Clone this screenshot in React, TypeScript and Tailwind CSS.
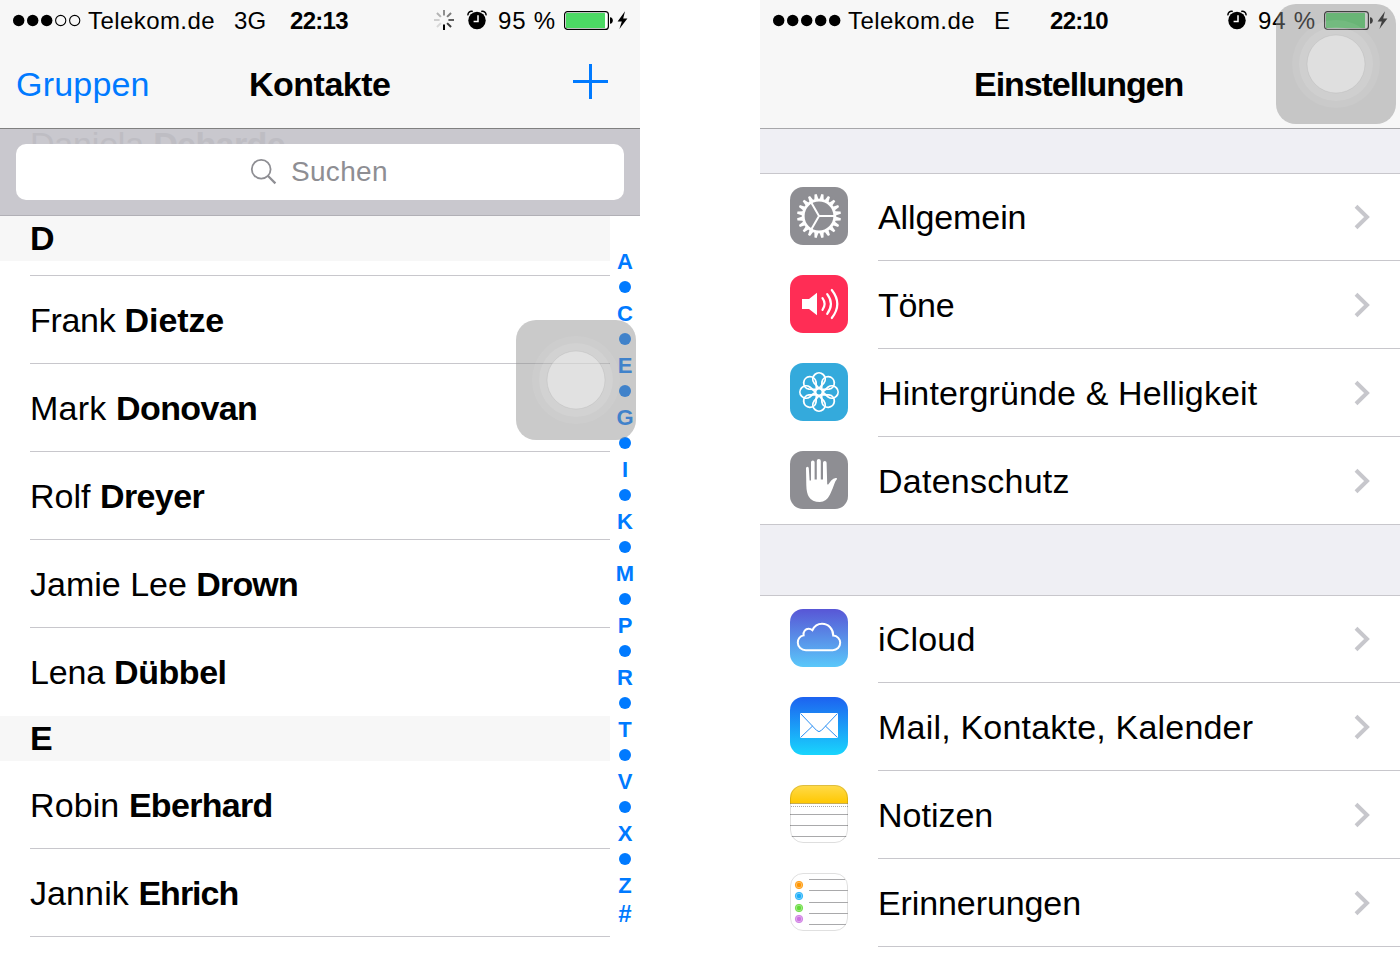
import React from "react";

const FONT = "font-['Liberation_Sans',Arial,sans-serif]";

function Signal({ filled }: { filled: number }) {
  return (
    <svg width="68" height="14" viewBox="0 0 68 14" className="shrink-0">
      {[0, 1, 2, 3, 4].map((i) =>
        i < filled ? (
          <circle key={i} cx={5.7 + i * 14} cy="7.5" r="5.7" fill="#000" />
        ) : (
          <circle key={i} cx={5.7 + i * 14} cy="7.5" r="5.1" fill="none" stroke="#000" strokeWidth="1.1" />
        )
      )}
    </svg>
  );
}

function Spinner() {
  const shades = ["#8e8e8e", "#7c7c7c", "#606060", "#3a3a3a", "#000", "#d8d8d8", "#cfcfcf", "#b4b4b4"];
  return (
    <svg width="20" height="20" viewBox="-10 -10 20 20" className="ml-px shrink-0">
      {shades.map((c, i) => (
        <line key={i} x1="0" y1="-4.4" x2="0" y2="-10" stroke={c} strokeWidth="2" transform={`rotate(${i * 45})`} />
      ))}
    </svg>
  );
}

function Alarm() {
  return (
    <svg width="20" height="20" viewBox="0 0 20 20" className="shrink-0">
      <circle cx="10" cy="10.5" r="8.7" fill="#000" />
      <path d="M11 5.2v6.3H6.6" fill="none" stroke="#fff" strokeWidth="1.5" />
      <path d="M1 5.4C.6 2.6 3 .9 5.8 1.5M19 5.4c.4-2.8-2-4.5-4.8-3.9" fill="none" stroke="#000" strokeWidth="1.5" />
    </svg>
  );
}

function Battery() {
  return (
    <svg width="65" height="22" viewBox="0 0 65 22" className="mt-[2px] shrink-0">
      <rect x="0.6" y="1.6" width="43.8" height="17.8" rx="3" fill="#fff" stroke="#000" strokeWidth="1.2" />
      <rect x="2" y="3" width="39" height="15" rx="0.5" fill="#4cd964" />
      <path d="M46 7.2q2.8.4 2.8 3.3t-2.8 3.3z" fill="#000" />
      <path d="M61 1.2l-7.4 10.2h4.2l-2.4 7.6 8-10.4h-4.2z" fill="#000" />
    </svg>
  );
}

function StatusBar({ filled, net, time, pct, spinner }: { filled: number; net: string; time: string; pct: string; spinner?: boolean }) {
  return (
    <div className="flex h-10 items-center pl-[13px] text-[24px] leading-[40px] whitespace-pre">
      <div className="flex w-[75px] items-center">
        <Signal filled={filled} />
      </div>
      <div className="w-[146px] tracking-[0.42px] pt-[2px]">Telekom.de</div>
      <div className="w-[56px] pt-[2px] tracking-[0.1px]">{net}</div>
      <div className="w-[143px] pt-[2px] font-bold tracking-[-0.7px]">{time}</div>
      <div className="flex w-[34px] items-center">{spinner && <Spinner />}</div>
      <div className="flex w-[31px] items-center">
        <Alarm />
      </div>
      <div className="w-[66px] pt-[2px] tracking-[0.8px]">{pct}</div>
      <Battery />
    </div>
  );
}

function Assistive() {
  return (
    <svg width="120" height="120" viewBox="0 0 120 120">
      <rect width="120" height="120" rx="20" fill="#8b8b8b" fillOpacity="0.46" />
      <circle cx="60" cy="60" r="44" fill="#fff" fillOpacity="0.07" />
      <circle cx="60" cy="60" r="37" fill="#fff" fillOpacity="0.1" />
      <circle cx="60" cy="60" r="29" fill="#fff" fillOpacity="0.34" stroke="#999" strokeOpacity="0.2" strokeWidth="1" />
    </svg>
  );
}

type Contact = { first: string; last: string; firstTracking?: string; lastTracking: string; rule?: boolean };

function ContactRow({ first, last, firstTracking = "", lastTracking, rule = true }: Contact) {
  return (
    <div className="ml-[30px] h-[88px]">
      <div
        className={
          rule
            ? "h-[88px] border-b border-[#c8c7cc] text-[34px] leading-[88px] whitespace-pre"
            : "h-[88px] text-[34px] leading-[88px] whitespace-pre"
        }
      >
        <span className={firstTracking}>{first} </span>
        <span className={"font-bold " + lastTracking}>{last}</span>
      </div>
    </div>
  );
}

function SectionHeader({ letter }: { letter: string }) {
  return <div className="h-[45px] bg-[#f7f7f7] pl-[30px] text-[34px] font-bold leading-[44px]">{letter}</div>;
}

const INDEX = ["A", "", "C", "", "E", "", "G", "", "I", "", "K", "", "M", "", "P", "", "R", "", "T", "", "V", "", "X", "", "Z"];

function Contacts() {
  return (
    <section className="relative h-[960px] w-[640px] overflow-hidden bg-white">
      <header className="h-[129px] border-b border-[#808080] bg-[#f7f7f7]">
        <StatusBar filled={3} net="3G" time="22:13" pct="95 %" spinner />
        <div className="flex h-[88px] items-center pl-4 text-[34px] leading-[88px]">
          <div className="w-[233px] tracking-[0.2px] text-[#007aff]">Gruppen</div>
          <h1 className="w-[324px] font-bold tracking-[-0.5px]">Kontakte</h1>
          <svg width="36" height="36" viewBox="0 0 36 36" className="-mt-[5px]">
            <path d="M17.5 0v35M0 17.5h35" stroke="#007aff" strokeWidth="3" />
          </svg>
        </div>
      </header>
      <div className="relative h-[87px] border-b border-[#b1b0b6] bg-[#c9c8ce] px-4 pt-[15px]">
        <div className="absolute top-0 left-[30px] -mt-[4px] text-[34px] leading-[38px] whitespace-pre text-[#bebdc3]">
          <span className="tracking-[-0.2px]">Daniela </span>
          <span className="font-bold tracking-[-0.6px]">Deharde</span>
        </div>
        <div className="relative flex h-14 items-center rounded-[10px] bg-white pl-[234px]">
          <svg width="28" height="28" viewBox="0 0 28 28" className="shrink-0">
            <circle cx="11.2" cy="11.2" r="9.4" fill="none" stroke="#8e8e93" strokeWidth="1.8" />
            <path d="M17.8 17.8l7.6 7.6" stroke="#8e8e93" strokeWidth="2.2" />
          </svg>
          <span className="ml-[13px] text-[28px] tracking-[0.3px] text-[#8e8e93]">Suchen</span>
        </div>
      </div>
      <div className="flex">
        <div className="w-[610px]">
          <SectionHeader letter="D" />
          <div className="ml-[30px] h-[15px] border-b border-[#c8c7cc]" />
          <ContactRow first="Frank" last="Dietze" firstTracking="tracking-[-0.3px]" lastTracking="tracking-[-0.1px]" />
          <ContactRow first="Mark" last="Donovan" firstTracking="tracking-[0.2px]" lastTracking="tracking-[-0.6px]" />
          <ContactRow first="Rolf" last="Dreyer" lastTracking="tracking-[-0.6px]" />
          <ContactRow first="Jamie Lee" last="Drown" lastTracking="tracking-[-0.85px]" />
          <ContactRow first="Lena" last="Dübbel" firstTracking="tracking-[-0.2px]" lastTracking="tracking-[-0.45px]" rule={false} />
          <SectionHeader letter="E" />
          <ContactRow first="Robin" last="Eberhard" firstTracking="tracking-[0.1px]" lastTracking="tracking-[-0.7px]" />
          <ContactRow first="Jannik" last="Ehrich" firstTracking="tracking-[0.1px]" lastTracking="tracking-[-1px]" />
        </div>
        <div className="flex w-[30px] flex-col items-center pt-8 text-[22px] font-bold text-[#007aff]">
          {INDEX.map((c, i) => (
            <div key={i} className="flex h-[26px] items-center justify-center leading-[26px]">
              {c ? <span className="pt-[2px]">{c}</span> : <span className="block h-3 w-3 rounded-full bg-[#007aff]" />}
            </div>
          ))}
          <div className="pt-[4px] text-[24px] leading-[24px]">#</div>
        </div>
      </div>
      <div className="absolute top-80 left-[516px]">
        <Assistive />
      </div>
    </section>
  );
}

function GearIcon() {
  return (
    <svg width="58" height="58" viewBox="0 0 58 58">
      <rect width="58" height="58" rx="13" fill="#8e8e93" />
      <g transform="translate(29 29)">
        {Array.from({ length: 20 }, (_, i) => (
          <path key={i} d="M-2.1 -16.5L-1.1 -22H1.1L2.1 -16.5z" fill="#fff" transform={`rotate(${i * 18 + 9})`} />
        ))}
        <circle r="15.8" fill="none" stroke="#fff" strokeWidth="2.8" />
        <path d="M0 0H15M0 0L-7.5 -13M0 0L-7.5 13" stroke="#fff" strokeWidth="2" />
      </g>
    </svg>
  );
}

function SoundIcon() {
  return (
    <svg width="58" height="58" viewBox="0 0 58 58">
      <rect width="58" height="58" rx="13" fill="#ff2d55" />
      <path d="M12 24h7l8-6.2v22.4L19 34h-7z" fill="#fff" />
      <path d="M32.500 23.200q4.200 5.800 0 11.600M37.200 19.200q7.400 9.800 0 19.600M41.800 15q11 14 0 28" fill="none" stroke="#fff" strokeWidth="2.200" strokeLinecap="round" />
    </svg>
  );
}

function FlowerIcon() {
  return (
    <svg width="58" height="58" viewBox="0 0 58 58">
      <rect width="58" height="58" rx="13" fill="#34aadc" />
      <g transform="translate(29 29)" fill="none" stroke="#fff" strokeWidth="1.8">
        {[0, 45, 90, 135, 180, 225, 270, 315].map((a) => (
          <path key={a} d="M0 -3.6L-5 -9.2A6.200 6.200 0 1 1 5 -9.2Z" transform={`rotate(${a})`} strokeLinejoin="round" />
        ))}
        <circle r="3.5" />
      </g>
    </svg>
  );
}

function HandIcon() {
  return (
    <svg width="58" height="58" viewBox="0 0 58 58">
      <rect width="58" height="58" rx="13" fill="#8e8e93" />
      <path
        d="M16 17.3q0-1.6 1.4-1.6t1.4 1.6L19.600 29.500H21V11.300q0-1.800 1.800-1.800t1.800 1.800V28.500H26.800V10q0-2 2-2t2 2V28.500H33V11.800q0-1.800 1.800-1.800t1.800 1.800L37.200 33q.6 1.200 1.400 0l2.600-3.400Q43.500 26.700 46.300 27q1.400.4.400 1.600-1.400 1.600-2.200 4-2.200 6.400-4.500 11Q36.500 51 29.800 51 22 51 19 46 16.500 42.500 16.300 34z"
        fill="#fff"
      />
    </svg>
  );
}

function CloudIcon() {
  return (
    <svg width="58" height="58" viewBox="0 0 58 58">
      <defs>
        <linearGradient id="cloud" x2="0" y2="1">
          <stop stopColor="#5856d6" />
          <stop offset="1" stopColor="#5ac8fa" />
        </linearGradient>
      </defs>
      <rect width="58" height="58" rx="13" fill="url(#cloud)" />
      <path
        d="M15.800 41.200C11.500 41.200 7.800 38 7.800 33.800C7.800 30 10.300 27.200 13.600 26.400C13 22.500 15.500 19.700 18.600 19.700Q20.700 19.700 22.400 21.200C24.400 17 28 14.800 32 14.800C38.500 14.800 43.300 20 43.200 26.600C47.300 26.800 50.200 30 50.200 33.800C50.200 38 47 41.200 42.800 41.200Z"
        fill="none"
        stroke="#fff"
        strokeWidth="2"
      />
    </svg>
  );
}

function MailIcon() {
  return (
    <svg width="58" height="58" viewBox="0 0 58 58">
      <defs>
        <linearGradient id="mail" x2="0" y2="1">
          <stop stopColor="#1d62f0" />
          <stop offset="1" stopColor="#19d5fd" />
        </linearGradient>
      </defs>
      <rect width="58" height="58" rx="13" fill="url(#mail)" />
      <rect x="10" y="16" width="38" height="25" fill="#fff" />
      <path d="M10.500 16.500L26.500 33.300Q29 36 31.500 33.300L47.500 16.500M10.500 40.500L22.600 29M47.500 40.500L35.400 29" fill="none" stroke="#2a8ff4" strokeWidth="1" />
    </svg>
  );
}

function NotesIcon() {
  return (
    <svg width="58" height="58" viewBox="0 0 58 58">
      <defs>
        <linearGradient id="notes" x2="0" y2="1">
          <stop stopColor="#ffdb4c" />
          <stop offset="1" stopColor="#ffc802" />
        </linearGradient>
        <clipPath id="notesClip">
          <rect width="58" height="58" rx="13" />
        </clipPath>
      </defs>
      <g clipPath="url(#notesClip)">
        <rect width="58" height="58" fill="#fff" />
        <rect width="58" height="18" fill="url(#notes)" />
        <path d="M0 18.500h58" stroke="#c5ab55" />
        <path d="M1 21.500h57" stroke="#aaa" strokeDasharray="1 1" />
        <path d="M0 29.500h58M0 40.500h58M0 51.500h58" stroke="#a9a9ab" />
      </g>
      <rect x="0.5" y="0.5" width="57" height="57" rx="12.500" fill="none" stroke="#000" strokeOpacity="0.13" />
    </svg>
  );
}

function RemindersIcon() {
  const dots: [number, string][] = [
    [12, "#ff9500"],
    [23, "#1badf8"],
    [35, "#63da38"],
    [46, "#cc73e1"],
  ];
  return (
    <svg width="58" height="58" viewBox="0 0 58 58">
      <rect x="0.5" y="0.5" width="57" height="57" rx="12.500" fill="#fff" stroke="#e0e0e0" />
      <path d="M19 6.500h36M19 17.500h39M19 29.500h39M19 40.500h39M19 51.500h37" stroke="#a9a9ab" />
      {dots.map(([y, c]) => (
        <g key={y}>
          <circle cx="9" cy={y} r="3.700" fill={c} fillOpacity="0.6" stroke={c} strokeWidth="0.800" />
          <circle cx="9" cy={y} r="2.200" fill={c} />
        </g>
      ))}
    </svg>
  );
}

type Item = { icon: React.ReactNode; label: string; tracking: string; full?: boolean };

function SettingRow({ icon, label, tracking, full }: Item) {
  return (
    <div className={full ? "flex h-[88px] border-b border-[#c8c7cc] pl-[30px]" : "flex h-[88px] pl-[30px]"}>
      <div className="w-[88px] pt-[14px]">{icon}</div>
      <div className={full ? "flex flex-1 items-center justify-between" : "flex flex-1 items-center justify-between border-b border-[#c8c7cc]"}>
        <span className={"text-[34px] leading-[86px] " + tracking}>{label}</span>
        <svg width="18" height="26" viewBox="0 0 18 26" className="mt-px mr-[29px]">
          <path d="M3 2.200L14 13L3 23.800" fill="none" stroke="#c7c7cc" strokeWidth="4" />
        </svg>
      </div>
    </div>
  );
}

function Settings() {
  return (
    <section className="relative h-[960px] w-[640px] overflow-hidden bg-white">
      <header className="h-[129px] border-b border-[#a7a7aa] bg-[#f7f7f7]">
        <StatusBar filled={5} net="E" time="22:10" pct="94 %" />
        <h1 className="pl-[214px] text-[34px] font-bold leading-[88px] tracking-[-1.05px]">Einstellungen</h1>
      </header>
      <div className="h-[45px] border-b border-[#c8c7cc] bg-[#efeff4]" />
      <div className="-mt-px">
        <SettingRow icon={<GearIcon />} label="Allgemein" tracking="tracking-[-0.1px]" />
        <SettingRow icon={<SoundIcon />} label="Töne" tracking="tracking-[-0.3px]" />
        <SettingRow icon={<FlowerIcon />} label="Hintergründe &amp; Helligkeit" tracking="tracking-[0.13px]" />
        <SettingRow icon={<HandIcon />} label="Datenschutz" tracking="tracking-[0.25px]" full />
      </div>
      <div className="h-[71px] border-b border-[#c8c7cc] bg-[#efeff4]" />
      <div className="-mt-px">
        <SettingRow icon={<CloudIcon />} label="iCloud" tracking="tracking-[0.2px]" />
        <SettingRow icon={<MailIcon />} label="Mail, Kontakte, Kalender" tracking="tracking-[0.2px]" />
        <SettingRow icon={<NotesIcon />} label="Notizen" tracking="tracking-[0px]" />
        <SettingRow icon={<RemindersIcon />} label="Erinnerungen" tracking="tracking-[-0.1px]" />
      </div>
      <div className="absolute top-1 left-[516px]">
        <Assistive />
      </div>
    </section>
  );
}

export default function App() {
  return (
    <main className={"flex h-[960px] w-[1400px] justify-between overflow-hidden bg-white text-black " + FONT}>
      <Contacts />
      <Settings />
    </main>
  );
}
